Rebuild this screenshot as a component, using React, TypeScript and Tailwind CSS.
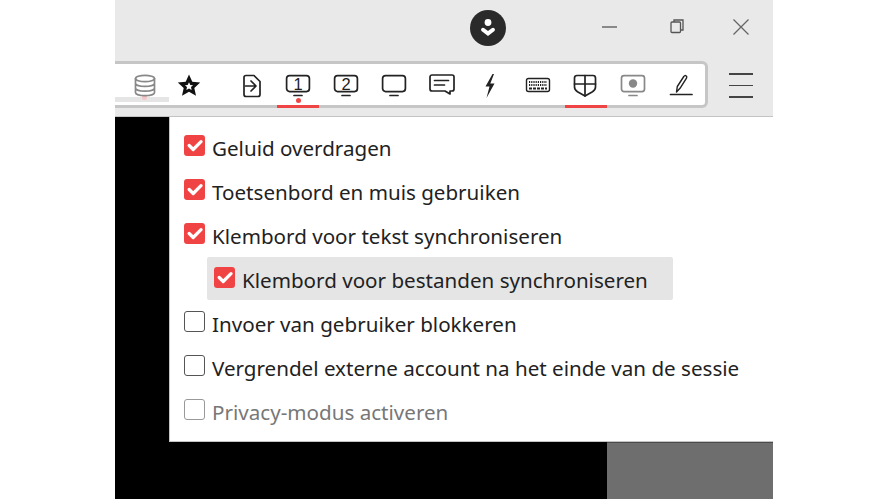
import type { ReactNode } from 'react';

const options = [
  { label: 'Geluid overdragen', checked: true },
  { label: 'Toetsenbord en muis gebruiken', checked: true },
  { label: 'Klembord voor tekst synchroniseren', checked: true },
  { label: 'Klembord voor bestanden synchroniseren', checked: true, nested: true },
  { label: 'Invoer van gebruiker blokkeren', checked: false },
  { label: 'Vergrendel externe account na het einde van de sessie', checked: false },
  { label: 'Privacy-modus activeren', checked: false, disabled: true },
];

function Svg({ children, stroke = '#222', w = 30 }: { children: ReactNode; stroke?: string; w?: number }) {
  return (
    <svg width={w} height="24" viewBox={`0 0 ${w} 24`} fill="none" stroke={stroke} strokeWidth="1.7" strokeLinecap="round" strokeLinejoin="round">
      {children}
    </svg>
  );
}

function Monitor({ digit }: { digit?: string }) {
  return (
    <Svg>
      <rect x="3.6" y="1.6" width="22.8" height="16" rx="3" />
      <path d="M11 21.5h8" />
      {digit && (
        <text x="15" y="15.6" textAnchor="middle" fontSize="16.5" fontFamily="Liberation Sans, sans-serif" fill="#222" stroke="none">
          {digit}
        </text>
      )}
    </Svg>
  );
}

function ToolButton({ children, active, dot }: { children: ReactNode; active?: boolean; dot?: boolean }) {
  return (
    <div className="relative w-[48px] h-full flex flex-col items-center pt-[10px]">
      {children}
      {dot && <div className="w-[5px] h-[5px] rounded-full bg-[#ee4444]" />}
      {active && <div className="absolute bottom-[-3px] left-[3px] w-[42px] h-[3px] bg-[#ee4444]" />}
    </div>
  );
}

function Checkbox({ checked, disabled }: { checked: boolean; disabled?: boolean }) {
  if (checked) {
    return (
      <div className="w-[21px] h-[21px] rounded-[3px] bg-[#f04444] flex items-center justify-center shrink-0">
        <svg width="16" height="13" viewBox="0 0 16 13" fill="none" stroke="#fff" strokeWidth="3.2" strokeLinecap="round" strokeLinejoin="round">
          <path d="M2.200 6.500l4 4L14 2.700" />
        </svg>
      </div>
    );
  }
  return (
    <div className={`w-[21px] h-[21px] rounded-[3px] border-[1.5px] shrink-0 ${disabled ? 'border-[#999999]' : 'border-[#555555]'}`} />
  );
}

function OptionRow({ label, checked, nested, disabled }: { label: string; checked: boolean; nested?: boolean; disabled?: boolean }) {
  return (
    <div className={`h-[44px] flex ${nested ? 'pl-[37px]' : 'pl-[14px]'}`}>
      <div className={`flex items-start gap-[7px] h-[43px] pt-[10px] rounded-[2px] ${nested ? 'bg-[#e5e5e5] w-[466px] pl-[7px]' : ''}`}>
        <Checkbox checked={checked} disabled={disabled} />
        <span className={`text-[20.6px] leading-[24px] mt-[1px] whitespace-nowrap ${disabled ? 'text-[#777777]' : 'text-[#222222]'}`}>{label}</span>
      </div>
    </div>
  );
}

export default function App() {
  return (
    <div className="w-[887px] h-[499px] bg-white overflow-hidden font-['Noto_Sans',sans-serif]">
      <div className="ml-[115px] w-[658px] h-full flex flex-col bg-black">
        {/* title bar */}
        <div className="h-[117px] bg-[#e9e9e9] border-b border-[#c4c4c4] flex flex-col shrink-0">
          <div className="h-[61px] flex items-start relative">
            <div className="ml-[355px] mt-[10px] w-[36px] h-[36px] rounded-full bg-[#2a2a2a] flex items-center justify-center">
              <svg width="20" height="22" viewBox="0 0 20 22" fill="#fff">
                <circle cx="10" cy="5.500" r="3.400" />
                <path d="M3.500 11.500c1-1 2-.8 2.800-.2L10 14l3.700-2.700c.8-.6 1.800-.8 2.800.2.800.9.500 2-.3 2.700L10 19l-6.200-4.800c-.8-.7-1.100-1.800-.3-2.700z" />
              </svg>
            </div>
            <div className="ml-[95px] mt-[17px] flex items-start">
              <svg width="17" height="20" viewBox="0 0 17 20" fill="none" stroke="#555" strokeWidth="1.300"><path d="M1 10h15" /></svg>
              <svg className="ml-[52px] mt-[1px]" width="15" height="17" viewBox="0 0 15 17" fill="none" stroke="#555" strokeWidth="1.300"><rect x="1" y="4" width="9.500" height="10.500" rx="1" /><path d="M4 4V2h9v10h-2.500" /></svg>
              <svg className="ml-[47px] mt-[1px]" width="18" height="18" viewBox="0 0 18 18" fill="none" stroke="#666" strokeWidth="1.300"><path d="M1.500 1.500l15 15M16.500 1.500l-15 15" /></svg>
            </div>
          </div>
          <div className="flex items-start">
            <div className="w-[593px] h-[47px] bg-white border-y-[3px] border-r-[3px] border-[#c6c6c6] rounded-r-[6px] flex items-stretch">
              <div className="w-[112px] relative flex">
                <div className="absolute left-0 bottom-[3px] w-[54px] h-[5px] bg-[#e5e5e5]" />
                <div className="absolute left-[27px] bottom-[5px] w-[5px] h-[5px] rounded-full bg-[#f6c4c4]" />
                <div className="relative ml-[15px] w-[30px] h-full pt-[10px]">
                  <Svg stroke="#888">
                    <ellipse cx="15" cy="4.500" rx="9.500" ry="3.200" />
                    <path d="M5.500 4.500v14c0 1.800 4.300 3.200 9.500 3.200s9.500-1.400 9.500-3.200v-14M5.500 9.200c0 1.800 4.300 3.200 9.500 3.200s9.500-1.400 9.500-3.200M5.500 14c0 1.800 4.300 3.200 9.500 3.200s9.500-1.400 9.500-3.200" />
                  </Svg>
                </div>
                <div className="ml-[17px] pt-[10px] relative">
                  <svg width="24" height="24" viewBox="0 0 24 24" fill="#111">
                    <path fillRule="evenodd" d="M12 .5l3.300 7.300 7.900.8-5.900 5.300 1.700 7.800-7-4-7 4 1.700-7.800L.8 8.600l7.900-.8zM12 8.300l-1.300 2.600-2.800.3 2.100 1.900-.6 2.800 2.600-1.500 2.600 1.500-.6-2.800 2.100-1.900-2.800-.3z" />
                  </svg>
                </div>
              </div>
              <ToolButton>
                <Svg>
                  <path d="M10 1.500h8l6 6v13a2 2 0 0 1-2 2h-12a2 2 0 0 1-2-2v-17a2 2 0 0 1 2-2z" />
                  <path d="M9.500 12h10M15 7l5 5-5 5" />
                </Svg>
              </ToolButton>
              <ToolButton active dot><Monitor digit="1" /></ToolButton>
              <ToolButton><Monitor digit="2" /></ToolButton>
              <ToolButton><Monitor /></ToolButton>
              <ToolButton>
                <Svg>
                  <path d="M5 1h20a2 2 0 0 1 2 2v12a2 2 0 0 1-2 2h-2v3l-5-3H5a2 2 0 0 1-2-2V3a2 2 0 0 1 2-2z" />
                  <path d="M7.500 6.500h14M7.500 11h10" />
                </Svg>
              </ToolButton>
              <ToolButton>
                <svg width="30" height="24" viewBox="0 0 30 24" fill="#222">
                  <path d="M17.500 0L10.500 12.500h4L11.500 24l8-14.500h-4.200l3.700-9.500z" />
                </svg>
              </ToolButton>
              <ToolButton>
                <Svg>
                  <rect x="3.500" y="4.500" width="23" height="13" rx="2" strokeWidth="1.400" />
                  <path d="M6 8h18M6 11h18" strokeWidth="1.800" strokeDasharray="1.200 1" strokeLinecap="butt" />
                  <path d="M6 14.500h18" strokeWidth="1.800" strokeDasharray="3 1" strokeLinecap="butt" />
                </Svg>
              </ToolButton>
              <ToolButton active>
                <Svg>
                  <path d="M15 1.500h8c1.500 0 2.500 1 2.500 2.500v9c0 2-1 3.500-3 4.800L15 22l-7.500-4.200c-2-1.300-3-2.800-3-4.800V4c0-1.500 1-2.500 2.500-2.500z" />
                  <path d="M15 1.500V22M4.500 10h21" />
                </Svg>
              </ToolButton>
              <ToolButton>
                <Svg stroke="#888">
                  <rect x="3.500" y="1.600" width="23" height="16" rx="2.500" />
                  <path d="M11 21.500h8" />
                  <circle cx="15" cy="9.500" r="4.200" fill="#888" stroke="none" />
                </Svg>
              </ToolButton>
              <ToolButton>
                <Svg>
                  <path d="M4.500 20.500h21.500" />
                  <path d="M10.500 18l.8-5.500 6.500-10c.6-1 1.500-1.200 2.300-.6.800.5.900 1.400.4 2.200l-6.500 10.200z" strokeWidth="1.400" />
                </Svg>
              </ToolButton>
            </div>
            <div className="ml-[21px] mt-[12px] w-[24px] flex flex-col gap-[10px]">
              <div className="h-[1.500px] bg-[#444444]" />
              <div className="h-[1.500px] bg-[#444444]" />
              <div className="h-[1.500px] bg-[#444444]" />
            </div>
          </div>
        </div>
        {/* menu over the black remote view */}
        <div className="flex-1 flex flex-col">
          <div className="ml-[54px] h-[325px] bg-white border-l border-b border-[#c4c4c4] pt-[8px]">
            {options.map((o) => (
              <OptionRow key={o.label} {...o} />
            ))}
          </div>
          <div className="flex-1 flex justify-end">
            <div className="w-[166px] bg-[#6e6e6e] border-t border-[#4a4a4a]" />
          </div>
        </div>
      </div>
    </div>
  );
}
